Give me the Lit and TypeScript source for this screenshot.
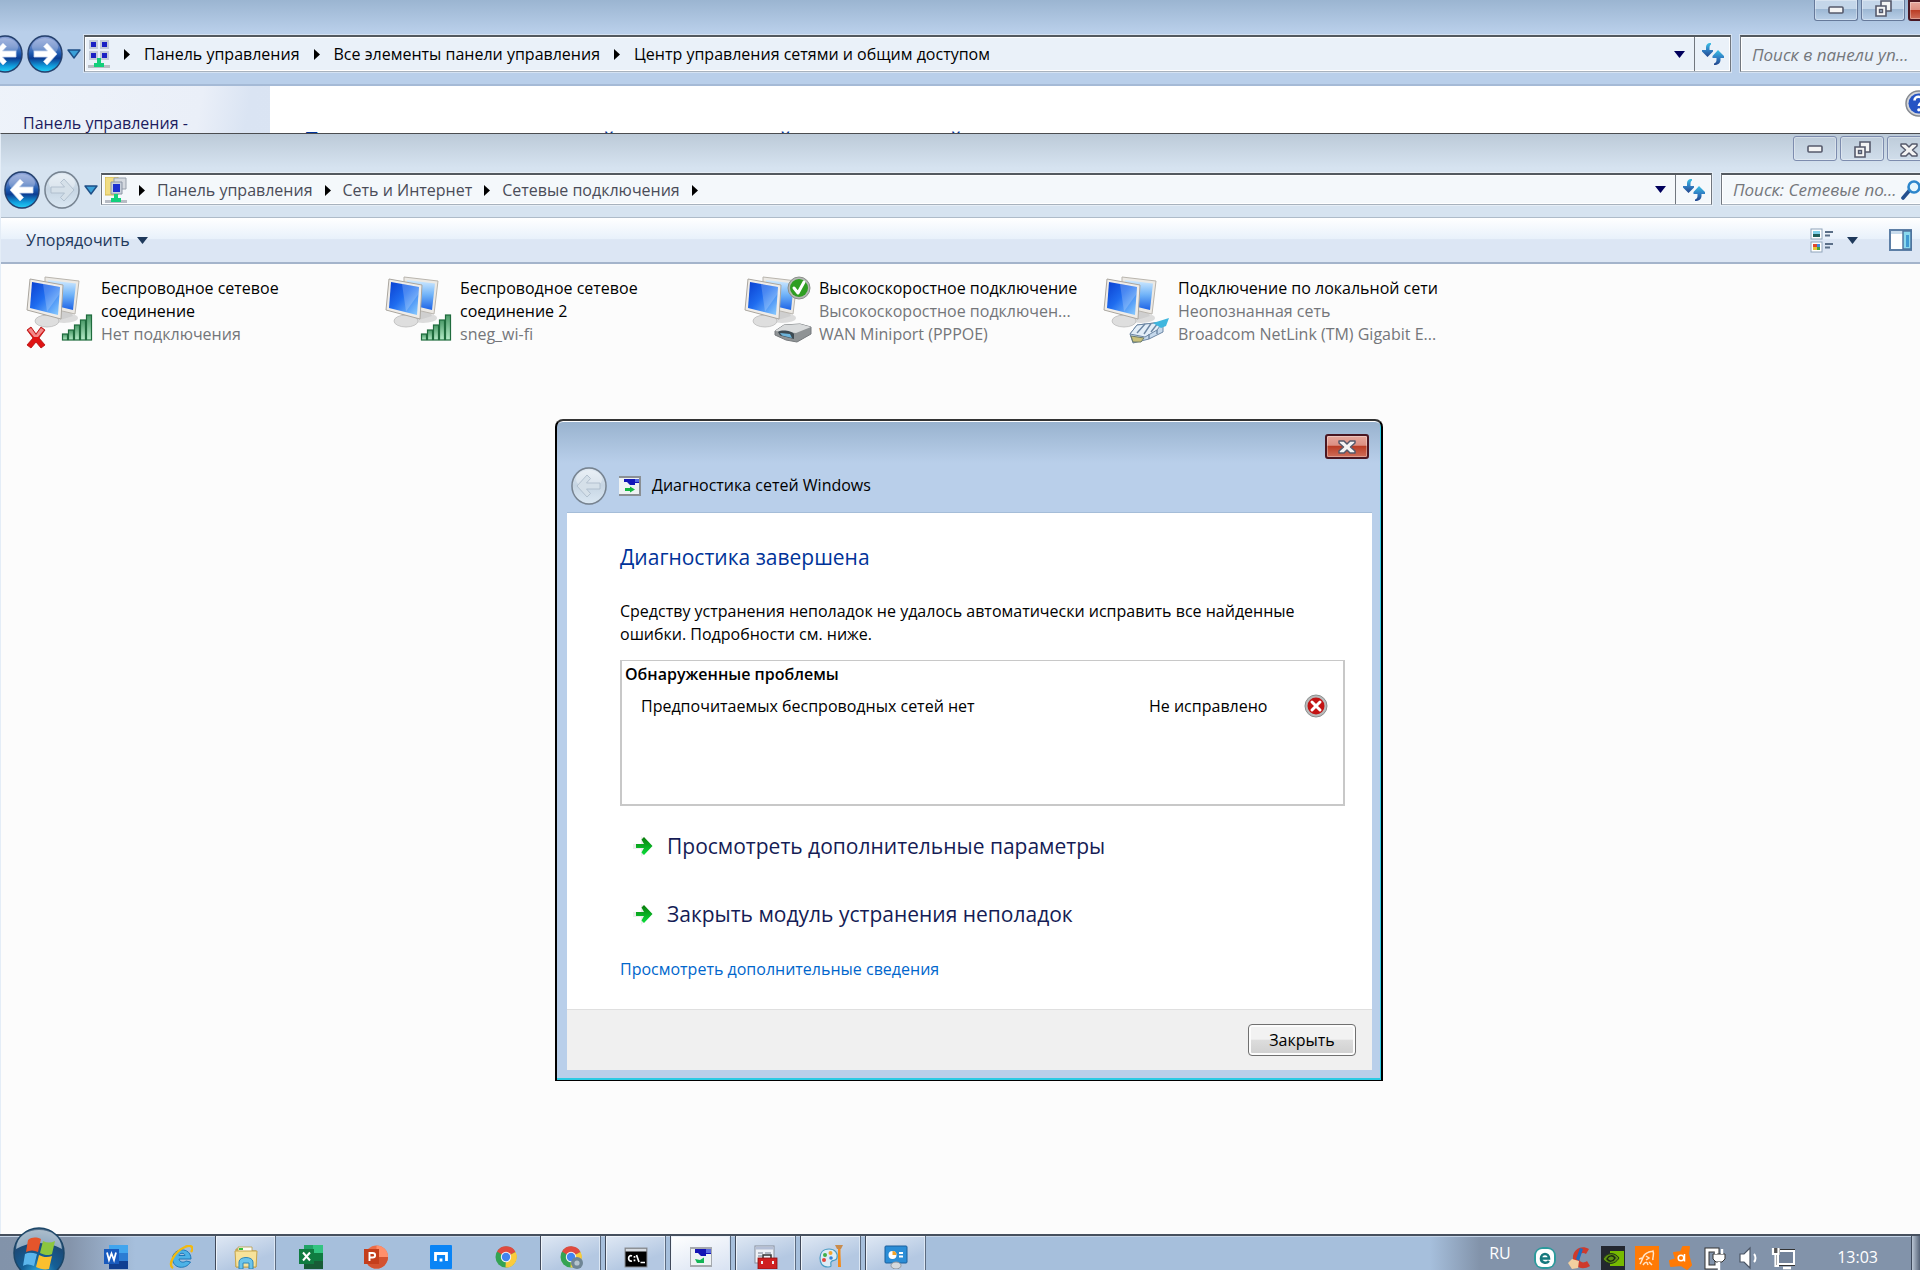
import { LitElement, html, svg, css, nothing, TemplateResult } from "lit";
import { customElement } from "lit/decorators.js";
import { classMap } from "lit/directives/class-map.js";

type Picture = TemplateResult;

interface Connection {
  name: string;
  status: string[];
  badge: Picture;
}

interface TaskItem {
  label: string;
  icon: Picture;
  open?: boolean;
  active?: boolean;
}

/* ---------- shared gradients ---------- */

const gradients = html`<svg class="defs" width="0" height="0" aria-hidden="true">
  <defs>
    <linearGradient id="orb" x1="0" y1="0" x2="0" y2="1">
      <stop offset="0" stop-color="#8da3d8" /><stop offset=".3" stop-color="#5c80c4" />
      <stop offset=".48" stop-color="#1f5bb0" /><stop offset=".62" stop-color="#0c3d93" />
      <stop offset=".85" stop-color="#12a3e0" /><stop offset="1" stop-color="#27d0f5" />
    </linearGradient>
    <linearGradient id="orbOff" x1="0" y1="0" x2="0" y2="1">
      <stop offset="0" stop-color="#dfe9f2" /><stop offset=".48" stop-color="#c6d5e3" />
      <stop offset="1" stop-color="#dbe8f3" />
    </linearGradient>
    <linearGradient id="screen" x1="0" y1="0" x2="1" y2="1">
      <stop offset="0" stop-color="#0a3fd0" /><stop offset=".45" stop-color="#1f6df0" />
      <stop offset="1" stop-color="#8fd0ff" />
    </linearGradient>
    <linearGradient id="screenBack" x1="0" y1="0" x2="0" y2="1">
      <stop offset="0" stop-color="#d2ebff" /><stop offset=".5" stop-color="#6fb2f8" />
      <stop offset="1" stop-color="#1d63e6" />
    </linearGradient>
    <linearGradient id="bars" x1="0" y1="0" x2="0" y2="1">
      <stop offset="0" stop-color="#4a9a68" /><stop offset="1" stop-color="#b5ecc8" />
    </linearGradient>
    <linearGradient id="refresh" x1="0" y1="0" x2="0" y2="1">
      <stop offset="0" stop-color="#3bc0e4" /><stop offset=".5" stop-color="#2f7fc4" />
      <stop offset="1" stop-color="#23468c" />
    </linearGradient>
    <linearGradient id="go" x1="0" y1="0" x2="0" y2="1">
      <stop offset="0" stop-color="#0a7a0a" /><stop offset="1" stop-color="#0ade3a" />
    </linearGradient>
    <radialGradient id="start" cx=".5" cy=".95" r=".9">
      <stop offset="0" stop-color="#35b8ea" /><stop offset=".4" stop-color="#155f96" />
      <stop offset=".75" stop-color="#1b4a78" /><stop offset="1" stop-color="#55718c" />
    </radialGradient>
  </defs>
</svg>`;

/* ---------- window glyphs ---------- */

const navArrow = (forward: boolean, enabled: boolean) => html`<svg class="nav-orb" viewBox="0 0 38 40" aria-hidden="true">
  <ellipse cx="19" cy="20" rx="18" ry="19" fill="#8fa3bb" opacity=".45" />
  <ellipse cx="19" cy="20" rx="17" ry="18" fill=${enabled ? "url(#orb)" : "url(#orbOff)"} stroke=${enabled ? "#24406e" : "#76828f"} stroke-width="1.4" />
  <ellipse cx="19" cy="13" rx="13" ry="9" fill="#fff" opacity=${enabled ? ".25" : ".35"} />
  <path d="M7 20 L17 9 L20.500 12.500 L16.500 17 H30 V23 H16.500 L20.500 27.500 L17 31 Z" transform=${forward ? "matrix(-1 0 0 1 38 0)" : ""}
    fill=${enabled ? "#fff" : "#d5e0e9"} stroke=${enabled ? "#c9d6ee" : "#a9b9c8"} stroke-width=".8" stroke-linejoin="round" />
</svg>`;

const navMenu = html`<svg width="14" height="12" viewBox="0 0 14 12" aria-hidden="true">
  <path d="M1 2 H13 L7 10 Z" fill="#3aa0d8" stroke="#1f4f86" stroke-width="1.4" stroke-linejoin="round" />
</svg>`;

const crumbArrow = html`<svg class="sep" width="6" height="11" viewBox="0 0 6 11" aria-hidden="true"><path d="M0 0 L6 5.500 L0 11 Z" fill="#000" /></svg>`;

const downArrow = (color: string) => html`<svg width="11" height="7" viewBox="0 0 11 7" aria-hidden="true"><path d="M0 0 H11 L5.5 7 Z" fill=${color} /></svg>`;

const refreshGlyph = html`<svg width="22" height="22" viewBox="0 0 22 22" aria-hidden="true">
  <g fill="url(#refresh)">
    <path d="M9 0 C5 0 4 2 4 5 V7 H0 V8.500 L5.500 14 L11 8.500 V7 H7.500 V5 C7.500 3 8 2 9 1.500 Z" />
    <path d="M12 22 C16 22 18.500 20 18.500 17 V15 H22 V13 L16 7 L10.500 13 V15 H14.500 V17 C14.500 19 13.500 20 12 20.500 Z" />
  </g>
</svg>`;

const magnifier = html`<svg width="22" height="20" viewBox="0 0 22 20" aria-hidden="true">
  <path d="M2 18 L8 11" stroke="#24508f" stroke-width="3.600" stroke-linecap="round" />
  <circle cx="13" cy="7" r="5.500" fill="#e6f6fd" stroke="#2c86cc" stroke-width="2.600" />
</svg>`;

const minGlyph = html`<svg width="16" height="9" viewBox="0 0 16 9" aria-hidden="true"><rect x="1" y="1" width="14" height="6" rx="1" fill="#f4f4f4" stroke="#55596b" stroke-width="1.600" /></svg>`;

const restoreGlyph = html`<svg width="17" height="17" viewBox="0 0 17 17" aria-hidden="true">
  <path d="M6 1 H16 V11 H6 Z" fill="#f4f4f4" stroke="#55596b" stroke-width="1.600" />
  <path d="M1 6 H11 V16 H1 Z" fill="#f4f4f4" stroke="#55596b" stroke-width="1.600" />
  <rect x="4.500" y="9.500" width="3" height="3" fill="#a9bdd6" stroke="#55596b" stroke-width="1.400" />
</svg>`;

const closeGlyph = html`<svg width="18" height="14" viewBox="0 0 18 14" aria-hidden="true">
  <path d="M1 1 H6 L9 4 L12 1 H17 V3 L12.500 7 L17 11 V13 H12 L9 10 L6 13 H1 V11 L5.500 7 L1 3 Z" fill="#f4f4f4" stroke="#55596b" stroke-width="1.500" stroke-linejoin="round" />
</svg>`;

const sharingCenterIcon = html`<svg width="22" height="28" viewBox="0 0 22 28" aria-hidden="true">
  <g fill="#c3cbd8">
    <rect x="1" y="0" width="9" height="9" /><rect x="12" y="0" width="9" height="9" />
    <rect x="1" y="11" width="9" height="9" /><rect x="12" y="11" width="9" height="9" />
  </g>
  <g fill="#1c22c4">
    <rect x="3" y="2" width="5" height="5" /><rect x="14" y="2" width="5" height="5" />
    <rect x="3" y="13" width="5" height="5" /><rect x="14" y="13" width="5" height="5" />
  </g>
  <path d="M0 25 H22 V28 H0 Z" fill="#b7bcc4" />
  <path d="M9 18 H13 V23 H16 V27 H6 V23 H9 Z" fill="#12cf7c" />
</svg>`;

const connectionsIcon = html`<svg width="22" height="26" viewBox="0 0 22 26" aria-hidden="true">
  <path d="M0 0 H13 V18 H0 Z" fill="#f1dd84" stroke="#d3b74e" />
  <path d="M9 1 H21 V12 H9 Z" fill="#d5dae0" stroke="#98a1ad" />
  <path d="M6 5 H17 V17 H6 Z" fill="#c9d1dc" stroke="#8c96a5" />
  <rect x="8" y="7" width="7" height="8" fill="#1a2fd0" />
  <path d="M0 23 H22 V26 H0 Z" fill="#b7bcc4" />
  <path d="M9 17 H13 V21 H16 V25 H6 V21 H9 Z" fill="#12cf7c" />
</svg>`;

const viewIcon = html`<svg width="24" height="25" viewBox="0 0 24 25" aria-hidden="true">
  <rect x="1" y="1" width="11" height="10" fill="#fff" stroke="#8fa4ba" /><rect x="3" y="3" width="7" height="3" fill="#7fd0e8" /><rect x="3" y="6" width="7" height="3" fill="#1f5f5a" />
  <rect x="1" y="14" width="11" height="10" fill="#fff" stroke="#8fa4ba" /><rect x="3" y="16" width="4" height="3" fill="#e2482e" /><rect x="7" y="16" width="3" height="3" fill="#3d8ae0" />
  <rect x="3" y="19" width="4" height="3" fill="#e8c437" /><rect x="7" y="19" width="3" height="3" fill="#4aa23c" />
  <path d="M15 4 H23 M15 7.500 H20 M15 16 H23 M15 19.500 H20" stroke="#5b6f88" stroke-width="1.800" />
</svg>`;

const paneIcon = html`<svg width="24" height="22" viewBox="0 0 24 22" aria-hidden="true">
  <rect x="1" y="1" width="21" height="20" fill="#fff" stroke="#5d7fa6" stroke-width="2" />
  <rect x="2" y="2" width="19" height="3" fill="#c9dced" />
  <rect x="14" y="2" width="8" height="18" fill="#8ad8ee" stroke="#4a6f9a" stroke-width="1.400" />
  <rect x="17" y="6" width="3" height="12" fill="#3f9ad2" />
</svg>`;

const helpIcon = html`<svg width="27" height="27" viewBox="0 0 27 27" aria-hidden="true">
  <circle cx="13.500" cy="13.500" r="12.500" fill="#d3d5d9" stroke="#85898f" stroke-width="1.500" />
  <circle cx="13.500" cy="13.500" r="10" fill="#2554c4" />
  <path d="M9.500 10.500 C9.500 5.500 17.500 5.500 17.500 10.500 C17.500 13 13.800 13 13.800 16" fill="none" stroke="#fff" stroke-width="2.600" />
  <circle cx="13.800" cy="19.800" r="1.600" fill="#fff" />
</svg>`;

/* ---------- connection pictures ---------- */

const computers = svg`
  <ellipse cx="38" cy="42" rx="14" ry="5" fill="#dcdcdc" />
  <path d="M34 34 L44 34 L47 40 L34 44 Z" fill="#cfcfcf" />
  <path d="M19 1 L53 5 L49 38 L19 31 Z" fill="#ece9e4" stroke="#b9b5ae" />
  <path d="M22 4 L50 7.500 L47 34 L22 28 Z" fill="url(#screenBack)" />
  <path d="M17 36 L28 38 L30 44 L16 44 Z" fill="#bcbcbc" />
  <ellipse cx="21" cy="45" rx="12" ry="6" fill="#dedede" stroke="#bbb" stroke-width=".8" />
  <path d="M4 3 L37 9 L35 43 L1 34 Z" fill="#efece8" stroke="#aaa69f" />
  <path d="M6 6 L34 11 L32 39 L4 32 Z" fill="url(#screen)" />
  <path d="M17 8 L34 11 L33.500 18 L21 35.500 Z" fill="#fff" opacity=".2" />`;

const signal = svg`<g fill="url(#bars)" stroke="#1f6b3d" stroke-width="1.200">
  <rect x="36.500" y="58" width="5" height="6" /><rect x="42.500" y="54" width="5" height="10" />
  <rect x="48.500" y="49" width="5" height="15" /><rect x="54.500" y="44" width="5" height="20" />
  <rect x="60.500" y="39" width="5" height="25" />
</g>`;

const offline = svg`<path d="M1 54 L5 51 L10 58 L15 51 L19 54 L13 62 L19 69 L15 72 L10 66 L5 72 L1 69 L7 62 Z" fill="#e01313" stroke="#b00b0b" stroke-width=".8" />
  <path d="M2 54 L5 52 L10 59 L15 52 L18 54 L12 61 H8 Z" fill="#f28a8a" />`;

const connected = svg`<circle cx="55" cy="12" r="11" fill="#b5b8b5" stroke="#8b8f8b" />
  <circle cx="55" cy="12" r="9" fill="#2f9e22" />
  <path d="M50 12 L54 17 L60 6" fill="none" stroke="#fff" stroke-width="3" stroke-linecap="round" stroke-linejoin="round" />`;

const modem = svg`<path d="M31 55 L40 49 L56 48 L67 51 V58 L53 66 L42 64 L31 59 Z" fill="#8f9395" stroke="#75797c" />
  <path d="M31 55 L40 49 L56 48 L67 51 L52 57 Z" fill="#d9dbdc" />
  <path d="M34 56 C38 53 48 55 50 58 L50 63 L36 59.500 Z" fill="#3d4a52" />
  <path d="M36 57 L46 58 L48 62 L38 59.500 Z" fill="#6fb6dc" />`;

const plug = svg`<path d="M27 58 L34 49 L60 46 V56 L46 63 L30 67 Z" fill="#c6d9ec" stroke="#6c86a3" />
  <path d="M27 58 L34 49 L60 46 L54 54 L42 61 Z" fill="#e3eef8" stroke="#6c86a3" />
  <path d="M34 57 L42 48 M41 58 L48 47.500 M48 56 L55 47 M46 63 V58 M54 58 V54" stroke="#6c86a3" stroke-width="1.400" />
  <path d="M28 60 L41 62 L38 66 L30 66 Z" fill="#c9c07a" stroke="#6d7c6a" />
  <path d="M50 47 L66 42 L63 50 L58 52 Z" fill="#3fb6de" />`;

const connectionPicture = (badge: Picture) => html`<svg class="conn-icon" viewBox="0 0 68 73" aria-hidden="true">${computers}${badge}</svg>`;

/* ---------- dialog glyphs ---------- */

const wizardIcon = html`<svg width="22" height="20" viewBox="0 0 22 20" aria-hidden="true">
  <rect width="22" height="20" fill="#8a8f94" /><rect y="2" width="20" height="16" fill="#eef2f3" />
  <path d="M5 3 H20 V7 H16 V9 H11 L8 6 H5 Z" fill="#1216b8" /><path d="M16 3 H20 V6 H16 Z" fill="#5065e0" />
  <path d="M6 12 H11 V10.500 L16 13.500 L11 16.500 V15 H6 Z" fill="#12b53e" />
</svg>`;

const errorIcon = html`<svg width="24" height="24" viewBox="0 0 24 24" role="img" aria-label="Ошибка">
  <circle cx="12" cy="12" r="11" fill="#b9bbbb" stroke="#8b8f8f" /><circle cx="12" cy="12" r="8.500" fill="#c31414" />
  <path d="M8 8 L16 16 M16 8 L8 16" stroke="#fff" stroke-width="3" stroke-linecap="round" />
</svg>`;

const goArrow = html`<svg width="22" height="22" viewBox="0 0 22 22" aria-hidden="true">
  <path d="M1 9 H9 V1 L20 11 L9 22 V14 H1 Z" fill="#000" opacity=".07" />
  <path d="M4 9 H12 L9.500 4.500 L12 2 L20.500 11 L12 20 L9.500 17.500 L12 13 H4 Z" fill="url(#go)" />
</svg>`;

/* ---------- taskbar pictures ---------- */

const box = (body: Picture) => html`<svg width="24" height="24" viewBox="0 0 24 24" aria-hidden="true">${body}</svg>`;

const startOrb = html`<svg class="start-orb" viewBox="0 0 52 52" aria-hidden="true">
  <circle cx="26" cy="26" r="25" fill="url(#start)" stroke="#1c4668" stroke-width="1.500" />
  <path d="M3 22 C4 9 14 3 26 3 C38 3 48 9 49 22 C36 14 16 14 3 22 Z" fill="#e4eef5" opacity=".6" />
  <path d="M15 13 C19 10 23 10 28 12 L25 25 C21 23 17 23 13 25 Z" fill="#e5552b" />
  <path d="M30 14 C34 16 38 16 42 14 L39 27 C36 29 31 28 27 26 Z" fill="#8cc63e" />
  <path d="M12 27 C16 25 20 26 24 27 L21 39 C17 37 13 37 10 39 Z" fill="#5cb6ec" />
  <path d="M26 28 C30 30 34 31 39 29 L36 42 C32 43 27 42 23 40 Z" fill="#fbbf2e" />
</svg>`;

const wordIcon = box(svg`<path d="M5 0 H24 V8 H5 Z" fill="#41a5ee" /><path d="M5 8 H24 V16 H5 Z" fill="#2b7cd3" /><path d="M5 16 H24 V24 H5 Z" fill="#103f91" />
  <rect y="4" width="15" height="15" fill="#185abd" /><path d="M3 7.500 L5 15 L7.500 8.500 L10 15 L12 7.500" fill="none" stroke="#fff" stroke-width="1.800" />`);

const excelIcon = box(svg`<path d="M5 0 H24 V8 H5 Z" fill="#33c481" /><path d="M5 0 H14 V8 H5 Z" fill="#21a366" /><path d="M5 8 H24 V16 H5 Z" fill="#107c41" /><path d="M5 16 H24 V24 H5 Z" fill="#185c37" />
  <rect y="4" width="15" height="15" fill="#107c41" /><path d="M4 7.500 L11 15.500 M11 7.500 L4 15.500" stroke="#fff" stroke-width="2" />`);

const powerPointIcon = box(svg`<circle cx="12.500" cy="12" r="11.500" fill="#ed6c47" /><path d="M12.500 .5 A11.500 11.500 0 0 1 24 12 H12.500 Z" fill="#ff8f6b" /><path d="M1 12 A11.500 11.500 0 0 0 24 12 Z" fill="#d35230" />
  <rect y="4" width="15" height="15" fill="#c43e1c" /><path d="M5.500 16 V8 H8.500 C12 8 12 12.500 8.500 12.500 H5.500" fill="none" stroke="#fff" stroke-width="1.900" />`);

const ieIcon = box(svg`<path d="M22 14 H10 C10.500 17.500 15 18 17 16 L21.500 17 C17 25 3.500 24 3.500 13.500 C3.500 3 22 1 22 14 Z M10 10.500 H16 C15.500 7.500 10.500 7.500 10 10.500 Z" fill="#4db2e6" fill-rule="evenodd" stroke="#1f78b8" />
  <path d="M4 23 C-2 20 6 6 16 2 C23 -1 25 3 22 7" fill="none" stroke="#f2b90f" stroke-width="2.400" />`);

const explorerIcon = box(svg`<path d="M2 4 H10 L12 6 H22 V22 H2 Z" fill="#e9cd74" stroke="#b99a45" /><path d="M4 2 H18 V8 H4 Z" fill="#fdfdf5" stroke="#b99a45" stroke-width=".8" /><rect x="5" y="3" width="4" height="2" fill="#36c23a" />
  <path d="M1 6 H23 L22 22 H2 Z" fill="#f7e29a" stroke="#c7a54c" /><path d="M5 24 V17 C5 11 19 11 19 17 V24 H15 V18 H9 V24 Z" fill="#6cc4ea" stroke="#2f86b8" />`);

const maxthonIcon = box(svg`<rect x="1" width="22" height="24" rx="1" fill="#0a84f5" /><path d="M6.500 16 V8.500 H17.500 V16 M12 16.500 V13.500" fill="none" stroke="#fff" stroke-width="2.800" />`);

const chromeArt = svg`<circle cx="12" cy="12" r="10.500" fill="#34a353" /><path d="M12 12 L3 6.500 A10.500 10.500 0 0 1 21.500 7 Z" fill="#e04a3f" /><path d="M12 12 L21.500 7 A10.500 10.500 0 0 1 11.500 22.500 Z" fill="#fbcb3c" />
  <circle cx="12" cy="12" r="5.200" fill="#f5f5f5" /><circle cx="12" cy="12" r="4.200" fill="#4284f0" />`;
const chromeIcon = box(chromeArt);
const chromeProfileIcon = box(svg`${chromeArt}<circle cx="18" cy="18" r="6" fill="#6f8594" /><circle cx="18" cy="18" r="2.600" fill="#b5c4cd" />`);

const consoleIcon = box(svg`<rect x="1" y="3" width="22" height="19" fill="#000" stroke="#8b8f96" /><rect x="1.500" y="3.500" width="21" height="3" fill="#d5dae0" />
  <path d="M8 11 C4 9 3 17 8 16 M10.500 11 V12.800 M10.500 14.500 V16.300 M12.500 10 L15 17 M16.500 17.500 H21" fill="none" stroke="#fff" stroke-width="1.700" />`);

const diagnosticsIcon = box(svg`<rect x="1" y="2" width="22" height="20" fill="#a5a9ae" /><rect x="2" y="4" width="20" height="16" fill="#eef2f3" />
  <path d="M6 4 H22 V9 H17 V11 H12 L9 8 H6 Z" fill="#1414b4" /><path d="M17 4 H22 V8 H17 Z" fill="#5a6ae0" /><path d="M6 14 L11 15 L15 12.500 V18 H8 Z" fill="#12b556" />`);

const toolboxIcon = box(svg`<rect x="1" y="1" width="19" height="17" fill="#eef1f5" stroke="#868d99" /><rect x="1.500" y="1.500" width="18" height="3" fill="#b4bfd6" /><path d="M4 8 H9 M4 11 H8 M11 8 H17" stroke="#9aa3b0" stroke-width="1.400" />
  <path d="M9 13 V10 H17 V13" fill="none" stroke="#333" stroke-width="1.500" /><rect x="4" y="13" width="19" height="11" fill="#cf2020" stroke="#8a1010" stroke-width=".8" /><path d="M8 16 V19 M19 16 V19" stroke="#eee" stroke-width="2" />`);

const paintIcon = box(svg`<path d="M10 4 C16 4 19 8 18 13 C17 17 14 14 12 17 C11 20 14 22 9 22 C3 22 1 18 1 13 C1 8 4 4 10 4 Z" fill="#dcecf6" stroke="#4a9cc4" stroke-width="1.200" />
  <circle cx="6" cy="10" r="2" fill="#3fb04a" /><circle cx="11.500" cy="8" r="2" fill="#f1a533" /><circle cx="5" cy="15" r="2" fill="#e2483e" /><circle cx="12" cy="13" r="1.800" fill="#3a83d8" />
  <path d="M16 0 H24 L22 4 H18 Z" fill="#c98c4d" /><path d="M19 4 H21.500 V9 L22 22 H19 Z" fill="#f28c1d" />`);

const controlPanelIcon = box(svg`<rect x="1" y="1" width="22" height="17" rx="1" fill="#2b8dd6" stroke="#1b5f9c" /><circle cx="8.500" cy="10" r="4" fill="#fff" /><path d="M8.500 10 V6 A4 4 0 0 1 12.500 10 Z" fill="#f4a329" />
  <path d="M15 8 H19 M15 11.500 H19" stroke="#fff" stroke-width="1.800" /><ellipse cx="12" cy="20.500" rx="5" ry="3.500" fill="#d5d9dd" stroke="#8f979f" />`);

const trayIcons: { label: string; icon: Picture }[] = [
  { label: "ESET", icon: box(svg`<rect x="1" y="1" width="22" height="22" rx="9" fill="#2c9a9c" /><rect x="3" y="3" width="18" height="18" rx="6" fill="#fff" /><path d="M8 12.500 H16 C16 6.500 8 6.500 8 12.500 C8 17 13.500 18 16 15" fill="none" stroke="#17787d" stroke-width="2.600" />`) },
  { label: "CCleaner", icon: box(svg`<path d="M22 3 C14 -2 5 4 6 13 C7 21 15 25 23 20 L20 15 C16 18 12 16 12 12 C12 7 16 6 19 8 Z" fill="#cf3a2c" /><path d="M13 2 L16 3 L12 15 L9 13 Z" fill="#1e6cc0" /><path d="M1 17 L5 13 L12 15 L11 22 L5 23 Z" fill="#f2d0a0" />`) },
  { label: "NVIDIA", icon: box(svg`<rect width="24" height="24" fill="#23272f" /><path d="M9 5 H23 V20 H9 Z" fill="#76b900" /><path d="M2 13 C6 6 14 6 18 12 C14 19 6 19 2 13 Z" fill="#5c8f10" stroke="#20301a" /><path d="M6 13 C8 9 12 9 14 12 C12 16 8 16 6 13 Z" fill="none" stroke="#1c2a12" stroke-width="1.500" />`) },
  { label: "Защита", icon: box(svg`<rect width="24" height="24" fill="#ff7a05" /><path d="M5 18 C8 14 7 9 12 7 C15 5 17 6 18 5 C20 9 17 11 18 14 M8 19 C10 16 12 15 13 19 M11 10 L14 12 L11 14 M14 16 L17 19 M4 13 L7 12" fill="none" stroke="#ffe4c8" stroke-width="1.500" />`) },
  { label: "Avast", icon: box(svg`<path d="M14 1 L20 1 L19 8 L22 19 L18 23 L12 19 L2 20 L1 15 L7 13 L5 7 L12 6 Z" fill="#ff7a05" stroke="#ff7a05" stroke-width="2" stroke-linejoin="round" /><circle cx="12" cy="12" r="2.800" fill="none" stroke="#fff" stroke-width="1.500" /><path d="M15.500 8 V15.500" stroke="#fff" stroke-width="1.500" />`) },
  { label: "Питание", icon: box(svg`<path d="M4 4 H14 V21 H4 Z" fill="#8293aa" stroke="#333" stroke-width="5" /><path d="M4 4 H14 V21 H4 Z" fill="none" stroke="#fff" stroke-width="3" /><path d="M10 8 H22 V13 L19 16 H13 L10 13 Z" fill="#fff" stroke="#333" /><path d="M13 3 V8 M19 3 V8 M16 16 V24" stroke="#fff" stroke-width="2.400" />`) },
  { label: "Громкость", icon: box(svg`<path d="M3 8 H7 L13 2 V22 L7 16 H3 Z" fill="#fff" stroke="#4c5666" stroke-width="1.200" /><path d="M17 8 C19 10 19 14 17 16" fill="none" stroke="#fff" stroke-width="2" />`) },
  { label: "Сеть", icon: box(svg`<rect x="7" y="5" width="16" height="13" fill="#73839a" stroke="#333" stroke-width="4" /><rect x="7" y="5" width="16" height="13" fill="#73839a" stroke="#fff" stroke-width="2" /><path d="M12 22 H20" stroke="#fff" stroke-width="2.600" /><path d="M1 2 H9 V9 H1 Z" fill="#555" /><path d="M2 2 V8 H7.500 V2 M4.500 8 V20 H8" fill="none" stroke="#fff" stroke-width="2.200" />`) },
];

const connections: Connection[] = [
  { name: "Беспроводное сетевое соединение", status: ["Нет подключения"], badge: svg`${signal}${offline}` },
  { name: "Беспроводное сетевое соединение 2", status: ["sneg_wi-fi"], badge: signal },
  { name: "Высокоскоростное подключение", status: ["Высокоскоростное подключен...", "WAN Miniport (PPPOE)"], badge: svg`${connected}${modem}` },
  { name: "Подключение по локальной сети", status: ["Неопознанная сеть", "Broadcom NetLink (TM) Gigabit E..."], badge: plug },
];

const tasks: TaskItem[] = [
  { label: "Word", icon: wordIcon },
  { label: "Internet Explorer", icon: ieIcon },
  { label: "Проводник", icon: explorerIcon, open: true },
  { label: "Excel", icon: excelIcon },
  { label: "PowerPoint", icon: powerPointIcon },
  { label: "Maxthon", icon: maxthonIcon },
  { label: "Chrome", icon: chromeIcon },
  { label: "Chrome, профиль", icon: chromeProfileIcon, open: true },
  { label: "Командная строка", icon: consoleIcon, open: true },
  { label: "Диагностика сетей Windows", icon: diagnosticsIcon, open: true, active: true },
  { label: "Инструменты", icon: toolboxIcon, open: true },
  { label: "Paint", icon: paintIcon, open: true },
  { label: "Панель управления", icon: controlPanelIcon, open: true },
];

@customElement("app-root")
export class AppRoot extends LitElement {
  static styles = css`
    :host {
      display: flex;
      flex-direction: column;
      min-height: 100vh;
      overflow: hidden;
      background: #b9d0ea;
      color: #000;
      font: 16px/23px "Open Sans", "Noto Sans", sans-serif;
    }
    * { box-sizing: border-box; }
    button, input { font: inherit; color: inherit; margin: 0; }
    button { padding: 0; border: 0; background: none; display: inline-flex; align-items: center; justify-content: center; }
    a { color: inherit; text-decoration: none; }
    h1, h2, p, ul { margin: 0; padding: 0; font-weight: 400; }
    ul { list-style: none; }
    svg { display: block; flex: none; }
    .defs { position: absolute; }

    .desktop { position: relative; flex: 1; overflow: hidden; }
    .window { position: absolute; display: flex; flex-direction: column; bottom: 0; white-space: nowrap; }
    .back-window { left: -16px; right: -60px; top: 0; background: linear-gradient(#9bb5d1, #b9cfea 32px, #b9cfea); }
    .front-window { left: 0; right: -14px; top: 133px; border-top: 1px solid #4b4d50; border-left: 1px solid #e4edf7; background: linear-gradient(#bccad8, #d6e3f0 34px, #d6e3f0); }

    .titlebar { display: flex; justify-content: flex-end; gap: 3px; }
    .back-window .titlebar { height: 35px; padding-right: 4px; }
    .front-window .titlebar { height: 39px; padding: 2px 3px 0 0; }
    .caption { width: 44px; height: 25px; border: 1px solid #7d8cae; border-radius: 3px; box-shadow: inset 0 0 0 1px #ffffff55; }
    .front-window .caption { padding-top: 2px; }
    .back-window .caption { height: 21px; border-top: 0; border-radius: 0 0 3px 3px; border-color: #66799a; background: linear-gradient(#c4d6e9 45%, #9cb7d3 46%, #bad0e8); }
    .back-window .restore { align-items: flex-start; }
    .back-window .caption.close { width: 68px; border: 2px solid #501824; border-top: 0; }
    .caption.red, .back-window .caption.close { border: 2px solid #4a1722; background: linear-gradient(#e6a79c, #dc8f82 45%, #b93a22 46%, #cf6e5a); }

    .address-row { display: flex; padding-right: 8px; }
    .back-window .address-row { height: 37px; padding-right: 12px; }
    .front-window .address-row { height: 32px; color: #4a4c58; }
    .nav { display: flex; align-items: center; width: 100px; padding-left: 2px; gap: 2px; }
    .front-window .nav, .front-window .crumbs { padding-top: 1px; }
    .nav-step { width: 38px; }
    .nav-orb { width: 38px; height: 40px; }
    .nav-menu { width: 16px; }
    .address { flex: 1; display: flex; align-items: stretch; min-width: 0; border: 1px solid #71777f; border-top: 2px solid #53595f; border-bottom-color: #a8b2bd; background: #eaf1f9; box-shadow: 0 0 0 1px #ffffff66, inset 0 0 0 1px #fff; }
    .front-window .address, .front-window .search { background: #f4f8fb; }
    .crumbs { flex: 1; display: flex; align-items: center; gap: 12px; padding-left: 3px; }
    .back-window .crumbs { gap: 14px; }
    .address-button { width: 30px; }
    .address-button.go { width: 36px; border-left: 1px solid #71777f; }
    .search { width: 205px; margin-left: 9px; display: flex; align-items: center; padding: 0 2px 0 11px; border: 1px solid #71777f; border-top: 2px solid #53595f; border-bottom-color: #a8b2bd; background: #eaf1f9; box-shadow: 0 0 0 1px #ffffff66, inset 0 0 0 1px #fff; font-size: 17px; }
    .back-window .search { width: 228px; }
    .search input { flex: 1; min-width: 0; width: 0; border: 0; padding: 0; background: none; font-style: italic; outline: 0; }
    .search input::placeholder { color: #74777c; opacity: 1; }

    .cp-body { display: flex; flex: 1; margin-top: 12px; border-top: 2px solid #a5bad6; background: #fff; align-items: flex-start; }
    .cp-side { align-self: stretch; width: 286px; padding: 26px 0 0 39px; color: #1c1c5e; background: linear-gradient(100deg, #eef3fa, #eaeff8 45%, #dae4f3 55%, #dce6f5); }
    .cp-title { flex: 1; padding: 39px 0 0 34px; font-size: 21px; line-height: 30px; color: #003399; }
    .cp-help { margin-right: 48px; padding-top: 4px; }

    .toolbar { display: flex; align-items: center; height: 47px; margin-top: 12px; padding: 0 21px 0 25px; border-top: 1px solid #aebbc9; border-bottom: 2px solid #a4b4cb; background: linear-gradient(#fff, #e8f1fb 48%, #dce6f4 49%, #dce6f4); color: #1e395b; }
    .organize { gap: 7px; }
    .tools { margin-left: auto; display: flex; align-items: center; gap: 13px; }
    .tools .pane { margin-left: 18px; }
    .list { flex: 1; display: grid; grid-template-columns: repeat(auto-fill, 359px); align-content: start; padding: 12px 0 0 25px; background: #fcfcfc; }
    .conn { display: flex; gap: 7px; align-items: flex-start; }
    .conn-icon { width: 68px; height: 73px; }
    .conn-text { width: 270px; padding-top: 1px; white-space: normal; }
    .conn-status { color: #74767a; display: block; }

    .dialog { position: absolute; left: 555px; top: 419px; width: 828px; padding: 0 9px 10px 10px; border: 2px solid #000; border-top-color: #333; border-bottom-width: 1px; border-radius: 8px 8px 0 0; background: linear-gradient(#98b2ce, #b9cfea 42px, #b9cfea); box-shadow: inset 0 2px 0 -1px #fff, inset -1px -2px 0 #2bcbe4; }
    .dialog-bar { display: flex; justify-content: flex-end; height: 38px; padding: 13px 3px 0 0; }
    .dialog-head { display: flex; align-items: center; height: 53px; padding-left: 3px; }
    .dialog-head .nav-step { margin-right: 11px; }
    .dialog-head h1 { font-size: 16px; margin-left: 11px; }
    .dialog-body { padding: 28px 27px 28px 53px; border-top: 1px solid #a5bdd8; background: #fff; }
    .dialog-body h2 { font-size: 21px; line-height: 32px; color: #003399; }
    .intro { padding: 27px 0 14px; }
    .problems { height: 146px; border: 2px solid #c8c8c8; border-top-width: 1px; padding: 2px 2px 0; }
    .problems table { width: 100%; border-collapse: collapse; }
    .problems caption { text-align: left; font-weight: 600; padding-left: 1px; }
    .problems td { padding: 8px 0 0; vertical-align: middle; }
    .problems td:first-child { padding-left: 17px; }
    .problems .state { width: 155px; }
    .problems .mark { width: 37px; }
    .commands { padding-top: 25px; display: flex; flex-direction: column; align-items: flex-start; gap: 38px; }
    .command { gap: 13px; padding-left: 12px; font-size: 21px; line-height: 30px; color: #151c55; }
    .more { display: inline-block; margin-top: 29px; color: #0066cc; }
    .dialog-foot { display: flex; justify-content: flex-end; padding: 14px 16px; border-top: 1px solid #dfdfdf; background: #f0f0f0; }
    .push { width: 108px; height: 32px; border: 1px solid #707070; border-radius: 4px; background: linear-gradient(#f2f2f2 48%, #dddddd 49%, #cfcfcf); box-shadow: inset 0 0 0 2px #fcfcfc; }

    .taskbar { position: relative; display: flex; height: 36px; border-top: 2px solid #46505e; background: linear-gradient(90deg, #8293aa, #8494ab 70px, #a6bfdc 135px, #a6bfdc calc(100% - 490px), #8293aa calc(100% - 440px), #8293aa); box-shadow: inset 0 1px 0 #c5d5e8; }
    .start { width: 83px; align-items: flex-start; justify-content: flex-start; padding-left: 13px; }
    .start-orb { width: 52px; height: 52px; margin-top: -9px; }
    .task { width: 65px; height: 34px; padding: 9px 0 0; align-items: flex-start; }
    .task.open { width: 61px; margin: 0 2px; border-left: 1px solid #40495a; border-right: 1px solid #5c6b80; background: linear-gradient(160deg, #dfe8f4, #b4c8e2 70%); box-shadow: inset 1px 1px 0 #eef4fb, inset -1px 0 0 #dce7f4; }
    .task.active { background: linear-gradient(160deg, #fff, #d8e2f2); }
    .tray { margin-left: auto; display: flex; color: #fff; }
    .lang { width: 39px; padding-top: 6px; text-align: left; }
    .tray-icon { width: 34px; align-items: flex-start; padding-top: 10px; }
    .clock { padding-top: 10px; margin: 0 33px 0 37px; }
    .peek { width: 9px; height: 34px; border-left: 1px solid #404c5e; background: linear-gradient(90deg, #b9c5d4, #566478); }
  `;

  private captions() {
    return html`
      <button class="caption" aria-label="Свернуть">${minGlyph}</button>
      <button class="caption restore" aria-label="Восстановить">${restoreGlyph}</button>
      <button class="caption close" aria-label="Закрыть окно">${closeGlyph}</button>`;
  }

  private addressRow(icon: Picture, crumbs: string[], tail: boolean, forward: boolean, hint: string, fieldId: string) {
    return html`<div class="address-row">
      <div class="nav">
        <button class="nav-step" aria-label="Назад">${navArrow(false, true)}</button>
        <button class="nav-step" aria-label="Вперед">${navArrow(true, forward)}</button>
        <button class="nav-menu" aria-label="Последние страницы">${navMenu}</button>
      </div>
      <div class="address">
        <nav class="crumbs">
          ${icon}
          ${crumbs.map((c) => html`${crumbArrow}<a href="#">${c}</a>`)}
          ${tail ? crumbArrow : nothing}
        </nav>
        <button class="address-button" aria-label="Предыдущие расположения">${downArrow("#00005c")}</button>
        <button class="address-button go" aria-label="Обновить">${refreshGlyph}</button>
      </div>
      <div class="search">
        <input id=${fieldId} type="text" aria-label=${hint} placeholder=${hint} />
        ${magnifier}
      </div>
    </div>`;
  }

  private backWindow() {
    return html`<section class="window back-window">
      <div class="titlebar">${this.captions()}</div>
      ${this.addressRow(sharingCenterIcon, ["Панель управления", "Все элементы панели управления", "Центр управления сетями и общим доступом"], false, true, "Поиск в панели уп...", "find-panel")}
      <div class="cp-body">
        <div class="cp-side"><a href="#">Панель управления -</a></div>
        <h2 class="cp-title">Просмотр основных сведений о сети и настройка подключений</h2>
        <button class="cp-help" aria-label="Справка">${helpIcon}</button>
      </div>
    </section>`;
  }

  private frontWindow() {
    return html`<section class="window front-window">
      <div class="titlebar">${this.captions()}</div>
      ${this.addressRow(connectionsIcon, ["Панель управления", "Сеть и Интернет", "Сетевые подключения"], true, false, "Поиск: Сетевые по...", "find-network")}
      <div class="toolbar">
        <button class="organize">Упорядочить ${downArrow("#1e395b")}</button>
        <div class="tools">
          <button aria-label="Вид">${viewIcon}</button>
          <button aria-label="Другие виды">${downArrow("#1e395b")}</button>
          <button class="pane" aria-label="Область просмотра">${paneIcon}</button>
        </div>
      </div>
      <ul class="list">
        ${connections.map((c) => html`<li class="conn">
          ${connectionPicture(c.badge)}
          <div class="conn-text">${c.name}${c.status.map((s) => html`<span class="conn-status">${s}</span>`)}</div>
        </li>`)}
      </ul>
    </section>`;
  }

  private dialog() {
    return html`<section class="dialog" role="dialog" aria-labelledby="dialog-title">
      <div class="dialog-bar"><button class="caption red" aria-label="Закрыть окно">${closeGlyph}</button></div>
      <div class="dialog-head">
        <button class="nav-step" aria-label="Назад" disabled>${navArrow(false, false)}</button>
        ${wizardIcon}
        <h1 id="dialog-title">Диагностика сетей Windows</h1>
      </div>
      <div class="dialog-body">
        <h2>Диагностика завершена</h2>
        <p class="intro">Средству устранения неполадок не удалось автоматически исправить все найденные ошибки. Подробности см. ниже.</p>
        <div class="problems">
          <table>
            <caption>Обнаруженные проблемы</caption>
            <tbody>
              <tr><td>Предпочитаемых беспроводных сетей нет</td><td class="state">Не исправлено</td><td class="mark">${errorIcon}</td></tr>
            </tbody>
          </table>
        </div>
        <div class="commands">
          <button class="command">${goArrow}Просмотреть дополнительные параметры</button>
          <button class="command">${goArrow}Закрыть модуль устранения неполадок</button>
        </div>
        <a class="more" href="#">Просмотреть дополнительные сведения</a>
      </div>
      <div class="dialog-foot"><button class="push">Закрыть</button></div>
    </section>`;
  }

  private taskbar() {
    return html`<footer class="taskbar">
      <button class="start" aria-label="Пуск">${startOrb}</button>
      ${tasks.map((t) => html`<button class=${classMap({ task: true, open: !!t.open, active: !!t.active })} aria-label=${t.label}>${t.icon}</button>`)}
      <div class="tray">
        <span class="lang">RU</span>
        ${trayIcons.map((t) => html`<button class="tray-icon" aria-label=${t.label}>${t.icon}</button>`)}
        <time class="clock">13:03</time>
        <button class="peek" aria-label="Свернуть все окна"></button>
      </div>
    </footer>`;
  }

  render() {
    return html`${gradients}
      <main class="desktop">${this.backWindow()}${this.frontWindow()}${this.dialog()}</main>
      ${this.taskbar()}`;
  }
}
